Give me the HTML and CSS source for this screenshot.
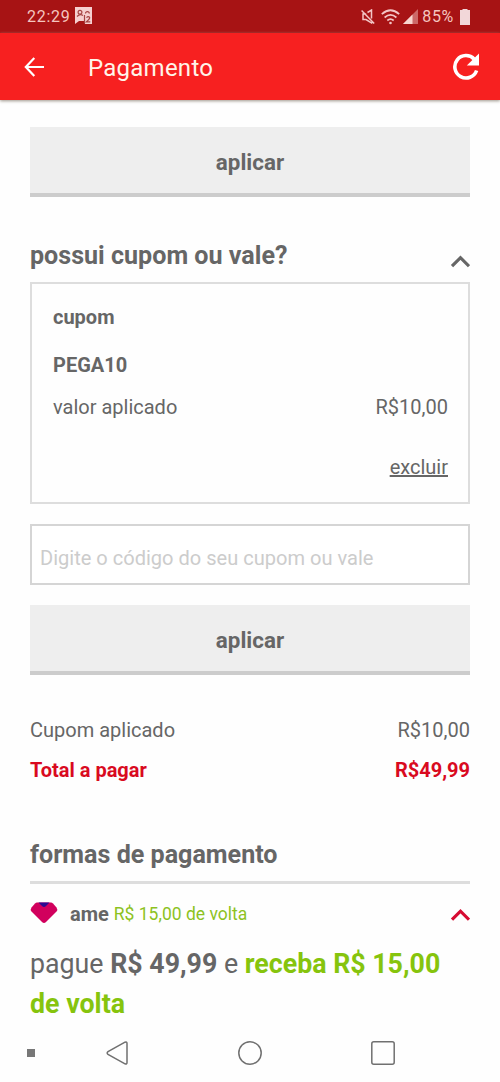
FILE: index.html
```html
<!DOCTYPE html>
<html lang="pt-BR">
<head>
<meta charset="utf-8">
<title>Pagamento</title>
<link rel="stylesheet" href="styles.css">
</head>
<body>
<div class="status">
  <span class="clock">22:29</span>
  <svg class="badge" width="18" height="18" viewBox="0 0 18 18"><path d="M0 0H17V17H10V14H4L0 17Z" fill="#f6cfcf"/><g fill="none" stroke="#a54343" stroke-width="1.2"><circle cx="5" cy="5.2" r="1.9"/><path d="M2 9.5Q5 6.5 8 8.5M10.500 6.500A1.900 1.900 0 0 1 14.300 6.500M9.500 8V16.500"/><path d="M11.500 10.700Q13 9 14.600 10.300Q15.300 11.500 11.500 14.800H15.300"/></g></svg>
  <div class="indicators">
    <svg width="14" height="16" viewBox="0 0 14 16" fill="none" stroke="#f3c5c5" stroke-width="1.5"><path d="M.6 1.500L13.200 14.500M5.200 5H2V10.500H5L10.500 14V11.800M6.500 3.500L10.500 1V9.500"/></svg>
    <svg class="wifi" width="19" height="16" viewBox="0 0 19 16" fill="none" stroke="#f3c5c5" stroke-width="1.7"><path d="M.8 5.200Q9.500-2.700 18.200 5.200M3.600 8.500Q9.500 3.200 15.400 8.500M6.300 11.500Q9.500 8.800 12.700 11.500"/><circle cx="9.500" cy="14" r="1.300" fill="#f3c5c5" stroke="none"/></svg>
    <svg class="signal" width="15" height="15" viewBox="0 0 15 15"><path d="M0 15L15 0V15Z" fill="#cc6868"/><path d="M0 15L9.500 5.500V15Z" fill="#f8d6d0"/></svg>
    <span class="percent">85%</span>
    <svg class="battery" width="10" height="16" viewBox="0 0 10 16"><path d="M2.500 0H7.500V1H10V16H0V1H2.500Z" fill="#f2d7d9"/></svg>
  </div>
</div>
<header class="appbar">
  <svg width="20" height="20" viewBox="0 0 20 20" fill="none" stroke="#fff" stroke-width="2.200"><path d="M10.300 1L1.800 10L10.300 19M1.800 10H20"/></svg>
  <h1 class="title">Pagamento</h1>
  <svg class="reload" width="28" height="28" viewBox="0 0 28 28"><path d="M22.300 6.200A11.200 11.200 0 1 0 24.600 17.500" fill="none" stroke="#fff" stroke-width="3.600"/><path d="M27 .5V12.500H14.800Z" fill="#fff"/></svg>
</header>
<main class="content">
  <button class="apply">aplicar</button>
  <div class="section-head">
    <h2 class="heading">possui cupom ou vale?</h2>
    <svg class="chevron" width="20" height="13" viewBox="0 0 20 13"><path d="M2 11.200L10.500 2.700L19 11.200" fill="none" stroke="#666" stroke-width="3.200"/></svg>
  </div>
  <section class="coupon">
    <b class="coupon-type">cupom</b>
    <b class="coupon-code">PEGA10</b>
    <div class="row"><span class="applied">valor aplicado</span><span class="amount">R$10,00</span></div>
    <a class="remove">excluir</a>
  </section>
  <input class="code" placeholder="Digite o código do seu cupom ou vale">
  <button class="apply">aplicar</button>
  <div class="summary">
    <div class="row"><span class="sum-label">Cupom aplicado</span><span class="sum-value">R$10,00</span></div>
    <div class="row total"><span class="total-label">Total a pagar</span><span class="total-value">R$49,99</span></div>
  </div>
  <h2 class="heading methods">formas de pagamento</h2>
  <div class="method">
    <svg class="ame-logo" width="28" height="22" viewBox="0 0 28 22"><path d="M7 .5H21Q22 .5 23 1.500L26.500 5.500Q28 7.500 26.500 9.500L16 20Q14 22 12 20L1.500 9.500Q0 7.500 1.500 5.500L5 1.500Q6 .5 7 .5Z" fill="#d1005d"/><path d="M8.500 .5H19.500L16 4Q14 5.800 12 4Z" fill="#2b0a91"/></svg>
    <b class="ame">ame</b>
    <span class="cashback">R$ 15,00 de volta</span>
    <svg class="method-chevron" width="20" height="13" viewBox="0 0 20 13"><path d="M2 11.700L10.500 3.200L19 11.700" fill="none" stroke="#d60b32" stroke-width="3.200"/></svg>
  </div>
  <p class="offer">pague <b>R$ 49,99</b> e <b class="green">receba R$ 15,00<br>de volta</b></p>
</main>
<nav class="navbar">
  <span class="dot"></span>
  <svg class="back" width="22" height="24" viewBox="0 0 22 24"><path d="M19 1.200L2 10.700Q.3 12 2 13.300L19 22.800Q21 23.500 21 21.500V2.500Q21 .5 19 1.200Z" fill="none" stroke="#707070" stroke-width="1.500"/></svg>
  <svg class="home" width="24" height="24" viewBox="0 0 24 24"><circle cx="12" cy="12" r="11.200" fill="none" stroke="#707070" stroke-width="1.500"/></svg>
  <svg class="recent" width="24" height="24" viewBox="0 0 24 24"><rect x=".8" y=".8" width="22.400" height="22.400" rx="2" fill="none" stroke="#707070" stroke-width="1.500"/></svg>
</nav>
</body>
</html>
```

FILE: styles.css
```css
* { box-sizing: border-box; }
body { margin: 0; width: 500px; height: 1082px; overflow: hidden; background: #fefefe; color: #666; font-family: Roboto, sans-serif; font-size: 20px; display: flex; flex-direction: column; }
h1, h2, p { margin: 0; }
svg { display: block; flex: none; }
.status { height: 33px; flex: none; background: #a71314; display: flex; align-items: center; padding: 0 30px 0 27px; color: #f5c5bf; font-size: 16px; }
.clock { width: 48px; letter-spacing: .7px; }
.badge { margin-top: -1px; }
.indicators { margin-left: auto; display: flex; align-items: center; }
.wifi { margin-left: 6px; }
.signal { margin-left: 3px; }
.percent { margin-left: 4px; letter-spacing: .7px; }
.battery { margin-left: 6px; }
.appbar { height: 67px; flex: none; background: #f72020; display: flex; align-items: center; padding: 0 20px 0 24px; box-shadow: 0 1px 3px #9c9488; }
.title { margin-left: 44px; padding-top: 3px; color: #fff5e9; font-size: 24px; font-weight: 400; letter-spacing: .25px; }
.reload { margin-left: auto; }
.content { flex: none; height: 925px; padding: 27px 30px 0; display: flex; flex-direction: column; }
.apply { flex: none; display: block; width: 100%; height: 70px; border: 0; border-bottom: 4px solid #ccc; padding: 4px 0 0; background: #eee; color: #666; font: 700 22.4px Roboto, sans-serif; }
.section-head { height: 85px; padding-top: 43px; display: flex; justify-content: space-between; }
.heading { font-size: 25.1px; font-weight: 700; line-height: 31px; }
.chevron { margin-top: 15px; }
.coupon { height: 222px; border: 2px solid #ddd; padding: 21px 20px 0 21px; display: flex; flex-direction: column; line-height: 24px; }
.coupon-code { margin-top: 24px; }
.coupon .row { margin-top: 18px; }
.row { display: flex; justify-content: space-between; }
.remove { margin: 36px 0 0 auto; text-decoration: underline; }
.code { flex: none; width: 100%; height: 61px; margin: 20px 0; border: 2px solid #d5d5d5; border-radius: 0; padding: 6px 8px 0; background: #fff; font: 400 20.06px Roboto, sans-serif; }
.code::placeholder { color: #ccc; opacity: 1; }
.summary { padding-top: 35px; line-height: 40px; }
.total { color: #d90a1f; font-weight: 700; }
.methods { margin-top: 49px; padding-bottom: 11px; border-bottom: 3px solid #ddd; }
.method { height: 60px; display: flex; align-items: center; }
.ame-logo { margin-top: -3px; }
.ame { margin-left: 12px; }
.cashback { margin-left: 5px; color: #8dc21f; font-size: 17.5px; }
.method-chevron { margin-left: auto; }
.offer { font-size: 26.75px; line-height: 40px; white-space: nowrap; }
.green { color: #86c40d; }
.navbar { flex: none; height: 57px; display: flex; align-items: center; padding: 0 105px 2px 27px; }
.dot { width: 8px; height: 8px; background: #777; }
.back { margin-left: 71px; }
.home { margin-left: 110px; }
.recent { margin-left: auto; }
```
